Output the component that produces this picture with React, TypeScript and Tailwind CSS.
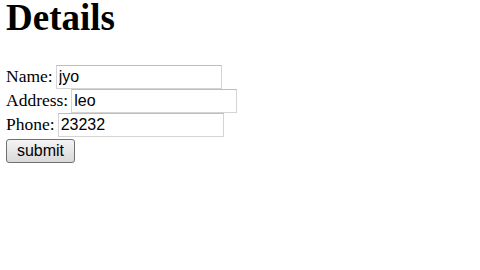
import { useState } from 'react';

const serif = "font-['Liberation_Serif','Times_New_Roman',serif]";
const sans = "font-['Liberation_Sans',Arial,sans-serif]";

function Field({ label, value }: { label: string; value: string }) {
  const [v, setV] = useState(value);
  return (
    <div className="flex h-[24px] items-center">
      <span className={`${serif} text-[17.5px] leading-none text-black`}>{label}</span>
      <input
        value={v}
        onChange={(e) => setV(e.target.value)}
        className={`${sans} ml-[3px] h-[24px] w-[166px] border border-[#d4d4d4] border-t-[#bdbdbd] bg-white px-[2px] text-[16px] text-black outline-none`}
      />
    </div>
  );
}

export default function App() {
  return (
    <div className="min-h-[270px] w-[480px] bg-white pl-[6px] pt-[2px]">
      <h1 className={`${serif} text-[37px] font-bold leading-[31px] text-black`}>Details</h1>

      <form className="mt-[32px] flex flex-col items-start" onSubmit={(e) => e.preventDefault()}>
        <Field label="Name:" value="jyo" />
        <Field label="Address:" value="leo" />
        <Field label="Phone:" value="23232" />
        <button
          type="submit"
          className={`${sans} mt-[2px] h-[24px] w-[69px] rounded-[3px] border border-[#707070] bg-gradient-to-b from-[#f4f4f4] to-[#d9d9d9] text-[16px] leading-none text-black`}
        >
          submit
        </button>
      </form>
    </div>
  );
}
